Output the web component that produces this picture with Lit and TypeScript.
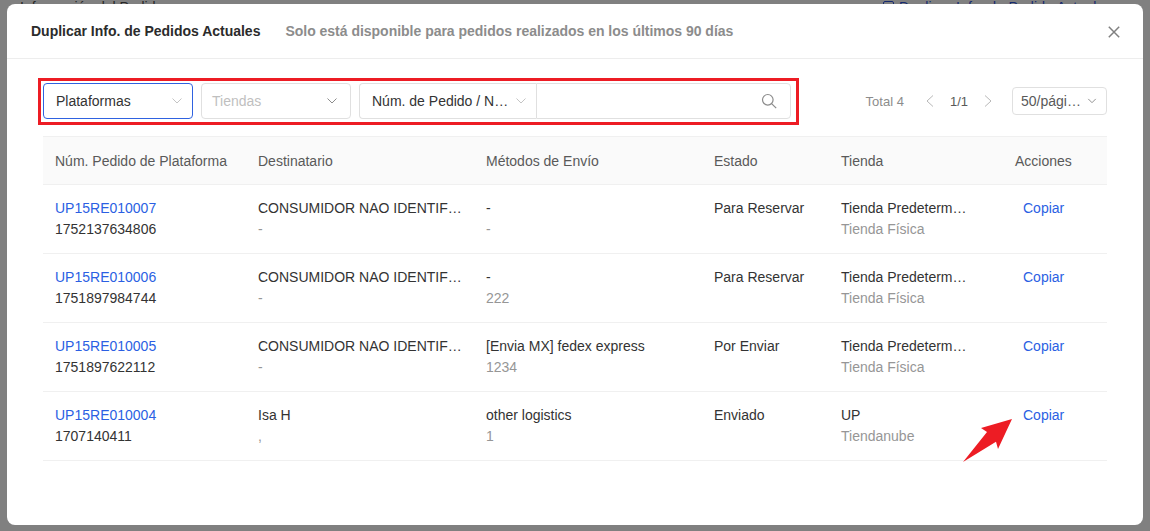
import { LitElement, html, css } from "lit";
import { customElement } from "lit/decorators.js";

const chevron = () => html`<svg class="chev" viewBox="0 0 12 12" width="12" height="12" fill="none" stroke="currentColor" stroke-width="1"><path d="M1.500 3.500L6 8L10.500 3.500"/></svg>`;

const rows = [
  ["UP15RE010007", "1752137634806", "CONSUMIDOR NAO IDENTIF…", "-", "-", "-", "Para Reservar", "Tienda Predeterm…", "Tienda Física"],
  ["UP15RE010006", "1751897984744", "CONSUMIDOR NAO IDENTIF…", "-", "-", "222", "Para Reservar", "Tienda Predeterm…", "Tienda Física"],
  ["UP15RE010005", "1751897622112", "CONSUMIDOR NAO IDENTIF…", "-", "[Envia MX] fedex express", "1234", "Por Enviar", "Tienda Predeterm…", "Tienda Física"],
  ["UP15RE010004", "1707140411", "Isa H", ",", "other logistics", "1", "Enviado", "UP", "Tiendanube"],
];

@customElement("app-root")
export class AppRoot extends LitElement {
  static styles = css`
    :host { display: block; position: relative; width: 1150px; height: 531px; overflow: hidden; background: #808080; box-sizing: border-box; padding: 4px 7px 6px; font-family: "Liberation Sans", Arial, sans-serif; font-size: 14px; color: #333; line-height: 21px; }
    * { box-sizing: border-box; }
    .back-left { position: absolute; left: 20px; top: -3px; color: #262626; }
    .back-right { position: absolute; left: 883px; top: -3px; color: #14296e; display: flex; gap: 5px; align-items: flex-start; letter-spacing: 0.2px; }
    .cb { width: 11px; height: 11px; border: 1px solid #14296e; border-radius: 2px; margin-top: 4px; }
    .modal { position: relative; height: 521px; background: #fff; border-radius: 8px; }
    .head { height: 55px; border-bottom: 1px solid #ededed; display: flex; align-items: center; padding: 0 24px; }
    .title { font-weight: 700; color: #2b2b2b; letter-spacing: -0.01px; }
    .sub { font-weight: 700; color: #8c8c8c; margin-left: 25px; letter-spacing: -0.015px; }
    .close { margin-left: auto; margin-right: -1px; margin-top: 2px; color: #808080; display: flex; }
    .body { padding: 24px 36px 0; position: relative; }
    .bar { display: flex; align-items: center; height: 36px; }
    .sel { height: 36px; border: 1px solid #e0e0e0; border-radius: 4px; display: flex; align-items: center; background: #fff; color: #333; }
    .sel .t { flex: 1; white-space: nowrap; }
    .s1 { width: 150px; border-color: #2f62e0; padding: 0 9px 0 12px; }
    .s2 { width: 150px; margin-left: 8px; color: #bfbfbf; padding: 0 12px 0 10px; }
    .s3 { width: 177px; margin-left: 8px; border-radius: 4px 0 0 4px; border-right: 0; padding: 0 9px 0 12px; }
    .chev { flex: none; color: #c4c4c4; }
    .s2 .chev { color: #8c8c8c; }
    .inp { width: 255px; height: 36px; border: 1px solid #e0e0e0; border-radius: 0 4px 4px 0; display: flex; align-items: center; justify-content: flex-end; padding-right: 13px; color: #8c8c8c; }
    .pager { margin-left: auto; display: flex; align-items: center; color: #8c8c8c; font-size: 13px; }
    .pager .n { color: #595959; margin: 0 14px; }
    .nav { display: flex; color: #b8b8b8; }
    .total { margin-right: 20px; }
    .size { width: 95px; height: 28px; margin-left: 18px; border: 1px solid #e0e0e0; border-radius: 4px; display: flex; align-items: center; padding: 0 8px; color: #595959; font-size: 14px; }
    .size .t { flex: 1; white-space: nowrap; }
    .size .chev { color: #7a7a7a; width: 10px; height: 10px; margin-right: 1px; }
    .red { position: absolute; left: 31px; top: 19px; width: 761px; height: 47px; border: 3px solid #ed1c24; pointer-events: none; }
    .table { margin-top: 17px; border-top: 1px solid #f0f0f0; }
    .row { display: grid; grid-template-columns: 203px 228px 228px 127px 174px 104px; border-bottom: 1px solid #f0f0f0; height: 69px; }
    .row.h { height: 48px; background: #fafafa; align-items: center; color: #595959; }
    .cell { padding: 13px 12px 0; min-width: 0; }
    .row.h .cell { padding-top: 2px; padding-bottom: 0; }
    .line { white-space: nowrap; }
    .muted { color: #969696; }
    .link { color: #2b5fe3; }
    .act { padding-left: 20px; }
    .arrow { position: absolute; left: 955px; top: 414px; }
  `;

  render() {
    return html`
      <div class="back-left">Información del Pedido</div>
      <div class="back-right"><span class="cb"></span><span>Duplicar Info. de Pedido Actual</span></div>
      <div class="modal">
        <div class="head">
          <span class="title">Duplicar Info. de Pedidos Actuales</span>
          <span class="sub">Solo está disponible para pedidos realizados en los últimos 90 días</span>
          <span class="close"><svg viewBox="0 0 12 12" width="12" height="12" fill="none" stroke="currentColor" stroke-width="1.500"><path d="M.8.8l10.400 10.400M11.200.8L.8 11.200"/></svg></span>
        </div>
        <div class="body">
          <div class="bar">
            <div class="sel s1"><span class="t">Plataformas</span>${chevron()}</div>
            <div class="sel s2"><span class="t">Tiendas</span>${chevron()}</div>
            <div class="sel s3"><span class="t">Núm. de Pedido / N…</span>${chevron()}</div>
            <div class="inp"><svg viewBox="0 0 16 16" width="16" height="16" fill="none" stroke="currentColor" stroke-width="1.200"><circle cx="6.800" cy="6.800" r="5.300"/><path d="M10.600 10.600l4.600 4.600"/></svg></div>
            <div class="pager">
              <span class="total">Total 4</span>
              <span class="nav"><svg viewBox="0 0 12 12" width="12" height="12" fill="none" stroke="currentColor"><path d="M9 .5L3 6l6 5.500"/></svg></span>
              <span class="n">1/1</span>
              <span class="nav"><svg viewBox="0 0 12 12" width="12" height="12" fill="none" stroke="currentColor"><path d="M3 .5L9 6l-6 5.500"/></svg></span>
              <div class="size"><span class="t">50/pági…</span>${chevron()}</div>
            </div>
          </div>
          <div class="red"></div>
          <div class="table">
            <div class="row h">
              <div class="cell">Núm. Pedido de Plataforma</div>
              <div class="cell">Destinatario</div>
              <div class="cell">Métodos de Envío</div>
              <div class="cell">Estado</div>
              <div class="cell">Tienda</div>
              <div class="cell">Acciones</div>
            </div>
            ${rows.map(r => html`
              <div class="row">
                <div class="cell"><div class="line link">${r[0]}</div><div class="line">${r[1]}</div></div>
                <div class="cell"><div class="line">${r[2]}</div><div class="line muted">${r[3]}</div></div>
                <div class="cell"><div class="line">${r[4]}</div><div class="line muted">${r[5]}</div></div>
                <div class="cell"><div class="line">${r[6]}</div></div>
                <div class="cell"><div class="line">${r[7]}</div><div class="line muted">${r[8]}</div></div>
                <div class="cell act"><div class="line link">Copiar</div></div>
              </div>`)}
          </div>
        </div>
      </div>
      <svg class="arrow" width="60" height="56" viewBox="0 0 60 56"><path d="M57 5L26 14L32 18L8 48L41 27.700L43 35Z" fill="#ed1c24"/></svg>
    `;
  }
}
